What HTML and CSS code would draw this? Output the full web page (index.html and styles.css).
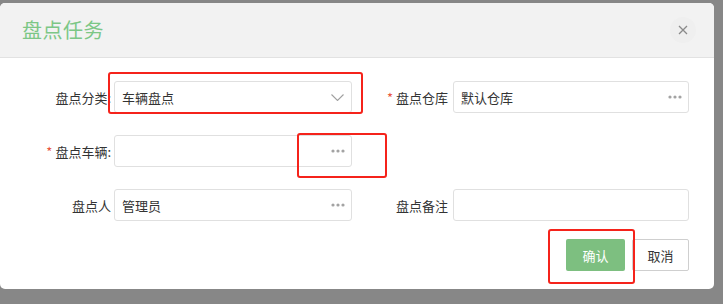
FILE: index.html
```html
<!DOCTYPE html>
<html lang="zh">
<head>
<meta charset="utf-8">
<link rel="stylesheet" href="styles.css">
</head>
<body>
<div class="dialog">
  <div class="header">
    <span class="title">盘点任务</span>
    <span class="close">
      <svg width="10" height="10" viewBox="0 0 10 10"><path d="M1 1L9 9M9 1L1 9" stroke="#8a8a8a" stroke-width="1.3" fill="none"/></svg>
    </span>
  </div>
  <div class="body">
    <div class="row">
      <div class="field left">
        <label class="label">盘点分类:</label>
        <div class="input"><span class="val">车辆盘点</span>
          <svg class="chev" width="13" height="7" viewBox="0 0 13 7"><path d="M0.5 0.5L6.5 6.5L12.5 0.5" stroke="#a0a0a0" stroke-width="1.1" fill="none"/></svg>
        </div>
      </div>
      <div class="field right">
        <label class="label"><span class="req">*</span>盘点仓库</label>
        <div class="input"><span class="val">默认仓库</span>
          <svg class="dots" width="14" height="4" viewBox="0 0 14 4"><circle cx="2" cy="2" r="1.6" fill="#a3a3a3"/><circle cx="7" cy="2" r="1.6" fill="#a3a3a3"/><circle cx="12" cy="2" r="1.6" fill="#a3a3a3"/></svg>
        </div>
      </div>
    </div>
    <div class="row">
      <div class="field left">
        <label class="label"><span class="req">*</span>盘点车辆:</label>
        <div class="input"><span class="val"></span>
          <svg class="dots" width="14" height="4" viewBox="0 0 14 4"><circle cx="2" cy="2" r="1.6" fill="#a3a3a3"/><circle cx="7" cy="2" r="1.6" fill="#a3a3a3"/><circle cx="12" cy="2" r="1.6" fill="#a3a3a3"/></svg>
        </div>
      </div>
    </div>
    <div class="row">
      <div class="field left">
        <label class="label">盘点人</label>
        <div class="input"><span class="val">管理员</span>
          <svg class="dots" width="14" height="4" viewBox="0 0 14 4"><circle cx="2" cy="2" r="1.6" fill="#a3a3a3"/><circle cx="7" cy="2" r="1.6" fill="#a3a3a3"/><circle cx="12" cy="2" r="1.6" fill="#a3a3a3"/></svg>
        </div>
      </div>
      <div class="field right">
        <label class="label">盘点备注</label>
        <div class="input"></div>
      </div>
    </div>
    <div class="actions">
      <button class="btn ok">确认</button>
      <button class="btn cancel">取消</button>
    </div>
  </div>
  <div class="mark m1"></div>
  <div class="mark m2"></div>
  <div class="mark m3"></div>
</div>
</body>
</html>
```
FILE: styles.css
```css
html, body {
  margin: 0;
  padding: 0;
}
body {
  background: #878787;
  width: 723px;
  height: 304px;
  overflow: hidden;
  font-family: "Noto Sans CJK SC", "Noto Sans", sans-serif;
  padding-top: 3px;
  box-sizing: border-box;
}
.dialog {
  position: relative;
  width: 714px;
  height: 286px;
  background: #fff;
  border-radius: 5px;
}
.header {
  height: 54px;
  background: #f2f2f2;
  border-bottom: 1px solid #e2e2e2;
  border-radius: 5px 5px 0 0;
  display: flex;
  align-items: center;
  justify-content: space-between;
  padding: 0 18px 0 22px;
}
.title {
  font-size: 20px;
  color: #7cc786;
  letter-spacing: 0.5px;
  line-height: 1;
}
.close {
  width: 26px;
  height: 26px;
  border-radius: 50%;
  background: #efefef;
  display: flex;
  align-items: center;
  justify-content: center;
}
.body {
  padding-top: 23px;
  display: flex;
  flex-direction: column;
  gap: 22px;
}
.row {
  display: flex;
  height: 32px;
}
.field {
  display: flex;
  align-items: center;
}
.label {
  font-size: 13px;
  color: #333;
  text-align: right;
  box-sizing: border-box;
  white-space: nowrap;
}
.left .label {
  width: 114px;
  padding-right: 3px;
}
.right .label {
  width: 101px;
  padding-right: 5px;
}
.req {
  color: #e8573f;
  margin-right: 3px;
  font-size: 13px;
}
.input {
  height: 32px;
  box-sizing: border-box;
  border: 1px solid #e0e0e0;
  border-radius: 3px;
  display: flex;
  align-items: center;
  justify-content: space-between;
  padding: 0 6px 0 7px;
  font-size: 13px;
  color: #333;
}
.left .input { width: 238px; }
.right .input { width: 236px; }
.dots {
  display: block;
}
.chev {
  display: block;
  margin-right: 1px;
}
.actions {
  display: flex;
  justify-content: flex-end;
  gap: 7px;
  width: 689px;
  margin-top: -4px;
}
.btn {
  height: 32px;
  font-family: inherit;
  font-size: 13px;
  border-radius: 2px;
  padding: 0;
}
.ok {
  width: 59px;
  background: #7dbf80;
  border: none;
  color: #fff;
}
.cancel {
  width: 57px;
  background: #fff;
  border: 1px solid #cfcfcf;
  color: #333;
}
.mark {
  position: absolute;
  border: 2px solid #f5231b;
  border-radius: 3px;
  box-sizing: border-box;
}
.m1 { left: 108px; top: 69px; width: 255px; height: 42px; }
.m2 { left: 297px; top: 130px; width: 90px; height: 45px; }
.m3 { left: 548px; top: 226px; width: 87px; height: 55px; }
```
